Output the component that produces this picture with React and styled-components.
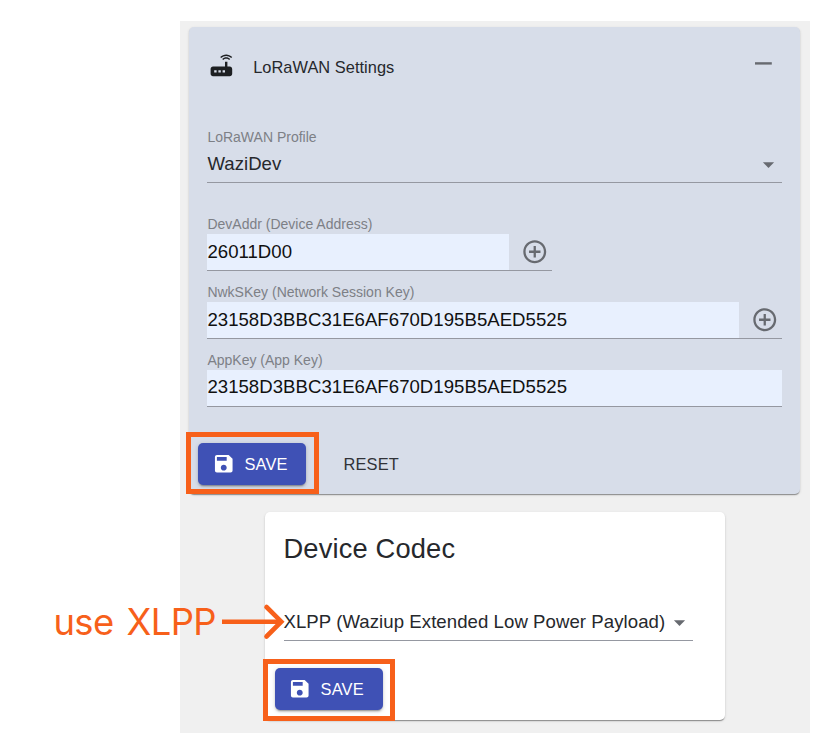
import React from "react";
import styled, { createGlobalStyle } from "styled-components";

const GlobalStyle = createGlobalStyle`
  * { box-sizing: border-box; }
  body {
    margin: 0;
    background: #fff;
    font-family: "Liberation Sans", Arial, sans-serif;
    color: #26282c;
  }
`;

const Page = styled.div`
  position: relative;
  width: 819px;
  height: 744px;
  padding: 21px 9px 0 180px;
  overflow: hidden;
`;

const Workspace = styled.main`
  width: 630px;
  height: 712px;
  padding: 6px 10px 0 9px;
  background: #f0f0f0;
  display: flex;
  flex-direction: column;
  gap: 18px;
`;

const Card = styled.section`
  display: flex;
  flex-direction: column;
  border-radius: 5px;
  box-shadow: 0 2px 1px -1px rgba(0, 0, 0, 0.24), 0 1px 1px rgba(0, 0, 0, 0.16),
    0 1px 3px rgba(0, 0, 0, 0.12);
`;

const SettingsCard = styled(Card)`
  height: 467px;
  padding: 0 18px 0 18.4px;
  background: #d7dde9;
`;

const CodecCard = styled(Card)`
  width: 460px;
  height: 208px;
  margin-left: 76px;
  padding: 0 33px 0 18.5px;
  background: #fff;
`;

const CardHeader = styled.header`
  display: flex;
  align-items: flex-start;
  height: 102px;
  padding-top: 24px;
`;

const Title = styled.h2`
  flex: 1;
  margin: 6px 0 0 17px;
  font-size: 16.4px;
  font-weight: 400;
  line-height: 20px;
  letter-spacing: 0.03px;
`;

const Heading = styled.h1`
  height: 86px;
  margin: 0;
  padding-top: 20px;
  font-size: 27.3px;
  font-weight: 400;
  line-height: 34px;
  letter-spacing: 0.15px;
  white-space: nowrap;
`;

const Icon = styled.svg`
  display: block;
  flex: none;
  width: ${(p) => p.$size}px;
  height: ${(p) => p.$size}px;
  fill: ${(p) => p.$color || "#676a70"};
`;

const CollapseIcon = styled(Icon)`
  margin: -1.8px 4px 0 0;
`;

const Field = styled.div`
  width: ${(p) => p.$width || "100%"};
  height: 68px;
  flex: none;
`;

const ProfileField = styled(Field)`
  height: 88px;
`;

const Label = styled.div`
  height: 17px;
  padding-top: ${(p) => p.$top || 0}px;
  font-size: 14px;
  line-height: 15px;
  color: #7d8086;
  white-space: nowrap;
`;

const Control = styled.div`
  display: flex;
  height: 37px;
  border-bottom: 1px solid #9598a1;
`;

const Value = styled.div`
  flex: 1;
  padding-top: ${(p) => p.$top || 7}px;
  background: ${(p) => (p.$filled ? "#e8f0fe" : "transparent")};
  color: ${(p) => (p.$filled ? "#111" : "#26282c")};
  font-size: 18.6px;
  line-height: 22px;
  letter-spacing: ${(p) => p.$spacing ?? 0.03}px;
  white-space: nowrap;
`;

const Adornment = styled.div`
  display: flex;
  width: 43px;
  padding: 4.4px 0 0 12px;
`;

const SelectArrow = styled(Icon)`
  margin-top: ${(p) => p.$top}px;
`;

const Actions = styled.div`
  display: flex;
  margin-left: -9px;
  gap: 20px;
`;

const Button = styled.button`
  display: flex;
  align-items: center;
  height: 42px;
  padding: 0 17px ${(p) => p.$lift || 0}px;
  border: 0;
  border-radius: 5px;
  background: transparent;
  font: 16.4px/20px "Liberation Sans", Arial, sans-serif;
  letter-spacing: 0.2px;
  color: #303238;
`;

const PrimaryButton = styled(Button)`
  width: 108px;
  padding: 0 0 ${(p) => p.$lift || 0}px 13.5px;
  gap: 9px;
  background: #3f51b5;
  color: #fff;
  box-shadow: 0 3px 1px -2px rgba(0, 0, 0, 0.2), 0 2px 2px rgba(0, 0, 0, 0.14),
    0 1px 5px rgba(0, 0, 0, 0.14);
`;

const Spacer = styled.div`
  flex: none;
  height: 22px;
`;

const CodecSelect = styled(Control)`
  flex: none;
  width: 409px;
  height: 43px;
  margin-bottom: 27px;
  padding: 6px 0 0;
`;

const Highlight = styled.div`
  position: absolute;
  left: ${(p) => p.$x}px;
  top: ${(p) => p.$y}px;
  width: ${(p) => p.$w}px;
  height: 62px;
  border: 5px solid #f7601a;
`;

const Note = styled.div`
  position: absolute;
  left: 53.5px;
  top: 600px;
  display: flex;
  align-items: center;
  height: 44px;
  font: 36.4px/44px Inter, sans-serif;
  letter-spacing: -0.65px;
  word-spacing: 3.5px;
  color: #f7601a;
  white-space: nowrap;
`;

const Arrow = styled.svg`
  position: absolute;
  left: 220px;
  top: 603px;
  fill: none;
  stroke: #f7601a;
  stroke-width: 4.6;
`;

const paths = {
  router:
    "M20.2 5.9l.8-.8C19.6 3.7 17.8 3 16 3s-3.6.7-5 2.1l.8.8C13 4.8 14.5 4.2 16 4.2s3 .6 4.2 1.7zm-.9.8c-.9-.9-2.1-1.4-3.3-1.4s-2.4.5-3.3 1.4l.8.8c.7-.7 1.6-1 2.5-1 .9 0 1.8.3 2.5 1l.8-.8zM19 13h-2V9h-2v4H5c-1.1 0-2 .9-2 2v4c0 1.1.9 2 2 2h14c1.1 0 2-.9 2-2v-4c0-1.1-.9-2-2-2zM8 18H6v-2h2v2zm3.5 0h-2v-2h2v2zm3.5 0h-2v-2h2v2z",
  save: "M17 3H5c-1.11 0-2 .9-2 2v14c0 1.1.89 2 2 2h14c1.1 0 2-.9 2-2V7l-4-4zm-5 16c-1.66 0-3-1.34-3-3s1.34-3 3-3 3 1.34 3 3-1.34 3-3 3zm3-10H5V5h10v4z",
  add: "M13 7h-2v4H7v2h4v4h2v-4h4v-2h-4V7zm-1-5C6.48 2 2 6.48 2 12s4.48 10 10 10 10-4.48 10-10S17.52 2 12 2zm0 18c-4.41 0-8-3.59-8-8s3.59-8 8-8 8 3.59 8 8-3.59 8-8 8z",
  down: "M7 10l5 5 5-5z",
  minus: "M19 13H5v-2h14v2z",
};

function Glyph({ name, as: Component = Icon, ...rest }) {
  return (
    <Component viewBox="0 0 24 24" aria-hidden="true" {...rest}>
      <path d={paths[name]} />
    </Component>
  );
}

function KeyField({ label, value, width, add, top }) {
  return (
    <Field $width={width}>
      <Label>{label}</Label>
      <Control>
        <Value $filled $top={top}>
          {value}
        </Value>
        {add && (
          <Adornment>
            <Glyph name="add" $size={27.5} />
          </Adornment>
        )}
      </Control>
    </Field>
  );
}

function SaveButton({ lift }) {
  return (
    <PrimaryButton $lift={lift}>
      <Glyph name="save" $size={23.5} $color="#fff" />
      SAVE
    </PrimaryButton>
  );
}

const KEY = "23158D3BBC31E6AF670D195B5AED5525";

export default function App() {
  return (
    <>
      <GlobalStyle />
      <Page>
        <Workspace>
          <SettingsCard>
            <CardHeader>
              <Glyph name="router" $size={28.8} $color="#1d1f22" />
              <Title>LoRaWAN Settings</Title>
              <Glyph name="minus" as={CollapseIcon} $size={28.8} />
            </CardHeader>
            <ProfileField $width="574.6px">
              <Label $top={1}>LoRaWAN Profile</Label>
              <Control>
                <Value>WaziDev</Value>
                <Glyph name="down" as={SelectArrow} $size={27} $top={5} />
              </Control>
            </ProfileField>
            <KeyField label="DevAddr (Device Address)" value="26011D00" width="344.6px" add />
            <KeyField label="NwkSKey (Network Session Key)" value={KEY} width="574.6px" add />
            <KeyField label="AppKey (App Key)" value={KEY} width="574.6px" top={6} />
            <Spacer />
            <Actions>
              <SaveButton lift={1} />
              <Button $lift={1}>RESET</Button>
            </Actions>
          </SettingsCard>
          <CodecCard>
            <Heading>Device Codec</Heading>
            <CodecSelect>
              <Value $spacing={0.06}>XLPP (Waziup Extended Low Power Payload)</Value>
              <Glyph name="down" as={SelectArrow} $size={27} $top={5} />
            </CodecSelect>
            <Actions>
              <SaveButton />
            </Actions>
          </CodecCard>
        </Workspace>
        <Highlight $x={186} $y={432} $w={133} />
        <Highlight $x={263} $y={659} $w={132} />
        <Note>use XLPP</Note>
        <Arrow width="66" height="38" viewBox="0 0 66 38" aria-hidden="true">
          <path d="M2 18.7H62" />
          <path d="M46.5 4L61.3 18.7L46.5 33.5" strokeLinecap="round" />
        </Arrow>
      </Page>
    </>
  );
}
